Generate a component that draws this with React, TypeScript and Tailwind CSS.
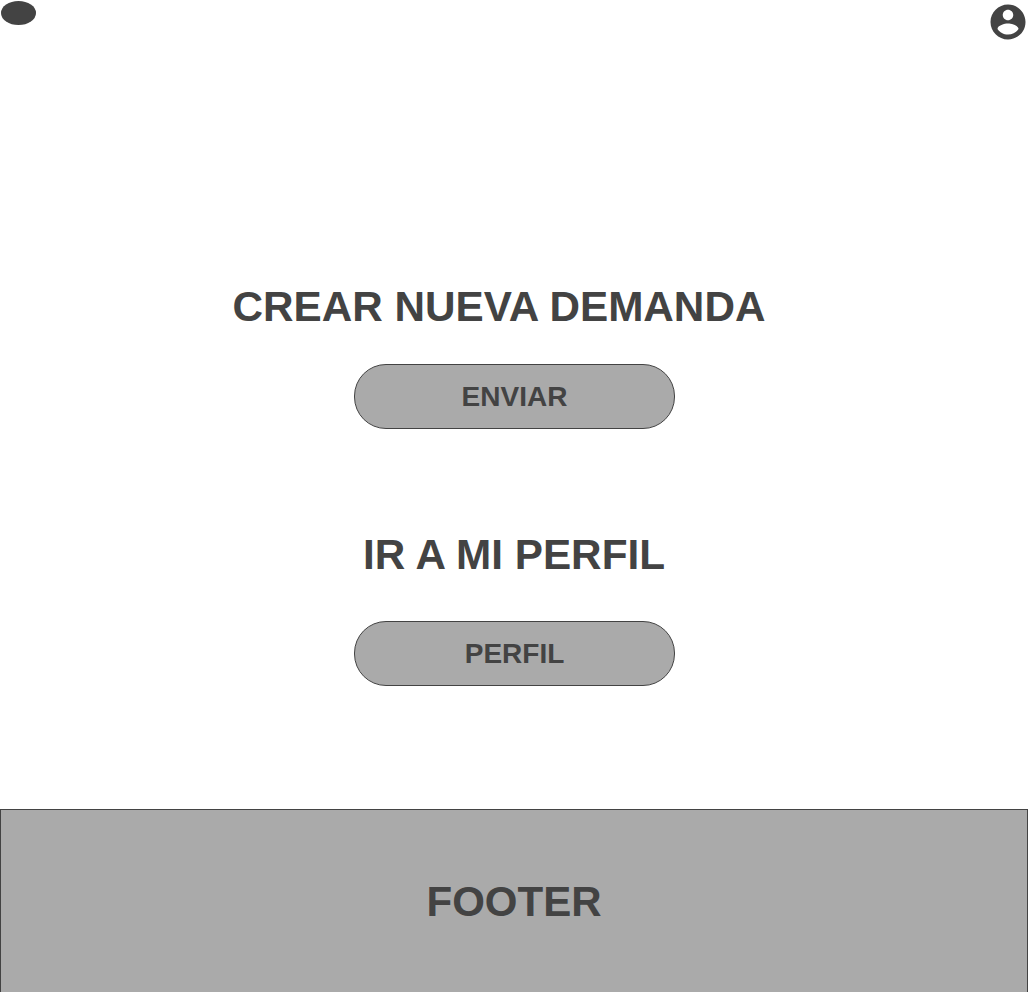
import React from "react";

function Heading({ children, className = "" }: { children: React.ReactNode; className?: string }) {
  return <h2 className={`whitespace-nowrap leading-[50px] font-bold ${className}`}>{children}</h2>;
}

function PillButton({ children, className = "" }: { children: React.ReactNode; className?: string }) {
  return (
    <button
      className={`flex h-[65px] w-[321px] items-center justify-center rounded-[32px] border border-[#434343] bg-[#aaaaaa] text-[28px] leading-[34px] font-bold ${className}`}
    >
      {children}
    </button>
  );
}

export default function App() {
  return (
    <div className="flex h-[992px] w-[1028px] flex-col overflow-hidden bg-white font-['Liberation_Sans',Arial,sans-serif] text-[#434343]">
      <header className="flex h-[44px] items-start justify-between pt-px pr-[2px] pl-px">
        <svg className="h-[24px] w-[35px]" viewBox="0 0 35 24" aria-label="Logo">
          <ellipse cx="17.5" cy="12" rx="17.5" ry="12" fill="#434343" />
        </svg>
        <svg className="mt-[3px] h-[36px] w-[36px]" viewBox="1.714 1.714 20.571 20.571" fill="#434343" aria-label="Usuario">
          <path d="M12 2C6.48 2 2 6.48 2 12s4.48 10 10 10 10-4.48 10-10S17.52 2 12 2zm0 3c1.66 0 3 1.34 3 3s-1.34 3-3 3-3-1.34-3-3 1.34-3 3-3zm0 14.2c-2.5 0-4.71-1.28-6-3.22.03-1.99 4-3.08 6-3.08 1.99 0 5.97 1.09 6 3.08-1.29 1.94-3.5 3.22-6 3.22z" />
        </svg>
      </header>
      <main className="flex h-[765px] flex-col items-center pt-[238px]">
        <Heading className="mr-[30px] text-[42.25px]">CREAR NUEVA DEMANDA</Heading>
        <PillButton className="mt-[32px] ml-px">ENVIAR</PillButton>
        <Heading className="mt-[101px] text-[42.25px]">IR A MI PERFIL</Heading>
        <PillButton className="mt-[41px] ml-px">PERFIL</PillButton>
      </main>
      <footer className="flex h-[183px] items-center justify-center border border-b-0 border-[#434343] bg-[#aaaaaa] pt-[2px]">
        <Heading className="text-[42px]">FOOTER</Heading>
      </footer>
    </div>
  );
}
